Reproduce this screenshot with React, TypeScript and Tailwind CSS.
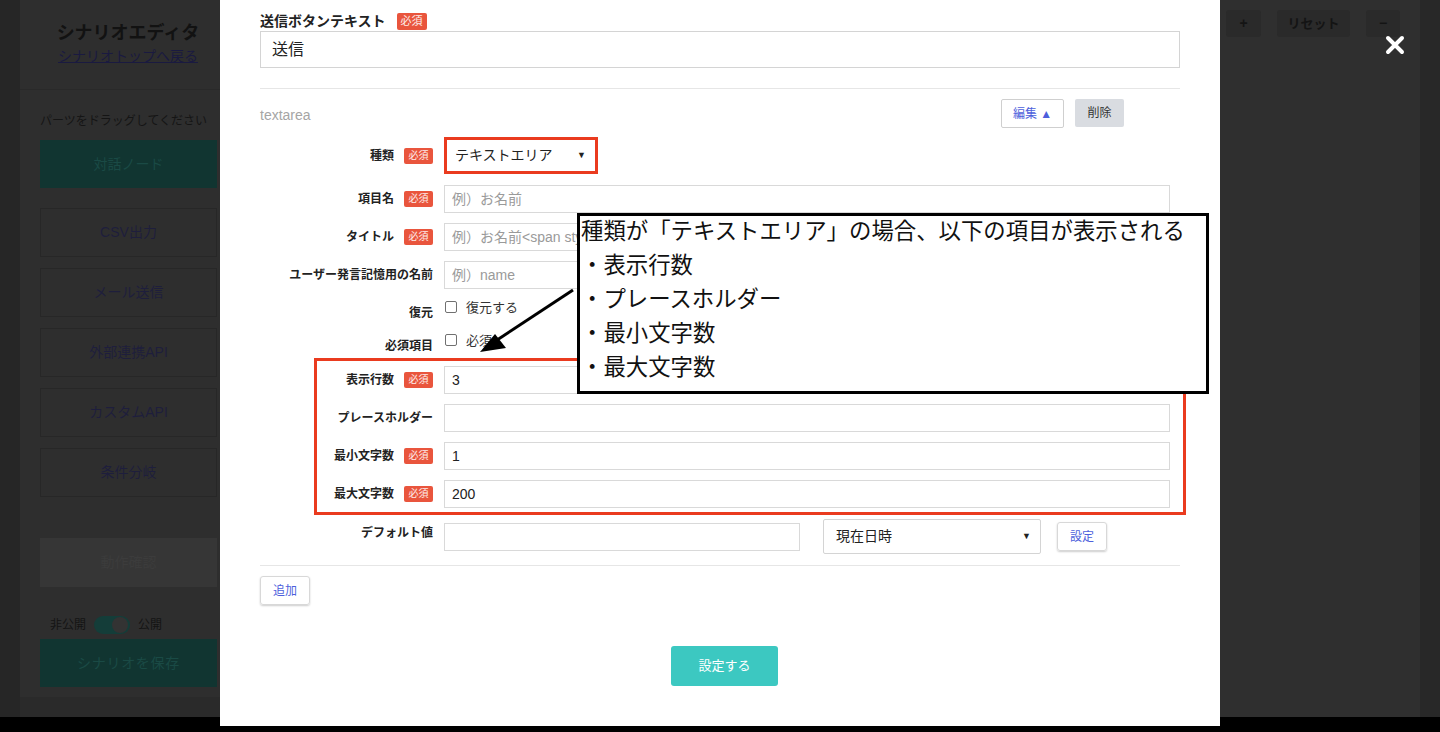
import { ReactNode } from 'react';

const sideParts = ['CSV出力', 'メール送信', '外部連携API', 'カスタムAPI', '条件分岐'];

function Badge() {
  return (
    <span className="inline-flex items-center justify-center h-[16px] w-[29px] rounded-[2px] bg-[#e9553d] text-[10px] leading-none text-white/90">
      必須
    </span>
  );
}

function Field({ value, placeholder, className = '' }: { value?: string; placeholder?: string; className?: string }) {
  return (
    <div
      className={`h-[28px] border border-[#d9d9d9] bg-white flex items-center px-[7px] text-[14px] ${className}`}
    >
      {value ? (
        <span className="text-[#222]">{value}</span>
      ) : (
        <span className="text-[#9a9a9a] whitespace-nowrap overflow-hidden">{placeholder}</span>
      )}
    </div>
  );
}

function Row({
  label,
  required,
  labelWidth = 'w-[184px]',
  children,
}: {
  label: string;
  required?: boolean;
  labelWidth?: string;
  children: ReactNode;
}) {
  return (
    <div className="flex items-center">
      <div className={`${labelWidth} shrink-0 flex items-center justify-end gap-[10px] pr-[11px]`}>
        <span className="text-[12px] font-bold text-[#222] whitespace-nowrap">{label}</span>
        {required && <Badge />}
      </div>
      {children}
    </div>
  );
}

function CheckRow({ label, text }: { label: string; text: string }) {
  return (
    <div className="flex h-[22px]">
      <div className="w-[184px] shrink-0 flex items-end justify-end pr-[11px]">
        <span className="text-[12px] font-bold text-[#222] leading-[18px]">{label}</span>
      </div>
      <div className="flex items-start gap-[9px] pl-[1px]">
        <span className="mt-[1px] w-[12px] h-[12px] border border-[#707070] rounded-[2px] bg-white" />
        <span className="text-[13px] leading-[16px] text-[#333]">{text}</span>
      </div>
    </div>
  );
}

function Sidebar() {
  return (
    <aside className="w-[200px] shrink-0 h-[697px] bg-[#2e2e2e] flex flex-col">
      <div className="h-[90px] border-b border-[#292929] flex flex-col items-center pt-[20px] pl-[16px]">
        <div className="text-[18px] font-bold text-[#121212] leading-[26px]">シナリオエディタ</div>
        <a className="text-[14px] text-[#1a1a40] underline leading-[20px]">シナリオトップへ戻る</a>
      </div>
      <div className="pl-[20px] pr-[3px] pt-[22px]">
        <div className="text-[12px] text-[#151515]">パーツをドラッグしてください</div>
        <div className="mt-[10px] h-[48px] bg-[#113531] flex items-center justify-center text-[14px] text-[#1a4a45]">
          対話ノード
        </div>
        <div className="mt-[20px] flex flex-col gap-[11px]">
          {sideParts.map((p) => (
            <div
              key={p}
              className="h-[49px] border border-[#272727] flex items-center justify-center text-[14px] text-[#1e1e3c]"
            >
              {p}
            </div>
          ))}
        </div>
        <div className="mt-[41px] h-[49px] bg-[#363636] flex items-center justify-center text-[14px] text-[#3c3c3c]">
          動作確認
        </div>
        <div className="mt-[29px] flex items-center gap-[8px] text-[12px] text-[#141414] pl-[10px]">
          <span>非公開</span>
          <span className="w-[36px] h-[18px] rounded-full bg-[#143d39] flex items-center pl-[18px]">
            <span className="w-[16px] h-[16px] rounded-full bg-[#333]" />
          </span>
          <span>公開</span>
        </div>
        <div className="mt-[5px] h-[48px] bg-[#113531] flex items-center justify-center text-[14px] text-[#1a4a45] tracking-wider">
          シナリオを保存
        </div>
      </div>
    </aside>
  );
}

export default function App() {
  return (
    <div className="relative w-[1440px] h-[732px] overflow-hidden bg-black font-['Liberation_Sans','Noto_Sans_CJK_JP',sans-serif]">
      {/* dimmed editor behind the dialog */}
      <div className="h-[717px] flex bg-[#2a2a2a]">
        <div className="w-[20px] shrink-0 bg-[#262626]" />
        <Sidebar />
        <div className="flex-1 bg-[#2f2f2f]">
          <div className="flex justify-end gap-[16px] pt-[10px] pr-[20px]">
            <span className="w-[35px] h-[27px] rounded-[3px] bg-[#2a2a2a] flex items-center justify-center text-[14px] font-bold text-[#141414]">
              +
            </span>
            <span className="w-[73px] h-[27px] rounded-[3px] bg-[#2a2a2a] flex items-center justify-center text-[13px] font-bold text-[#141414]">
              リセット
            </span>
            <span className="w-[34px] h-[27px] rounded-[3px] bg-[#2a2a2a] flex items-center justify-center text-[14px] font-bold text-[#141414]">
              −
            </span>
          </div>
        </div>
        <div className="w-[20px] shrink-0 bg-[#282828]" />
      </div>

      {/* close button */}
      <svg className="absolute left-[1385px] top-[35px]" width="20" height="20" viewBox="0 0 20 20">
        <path d="M3 3 L17 17 M17 3 L3 17" stroke="white" strokeWidth="4" strokeLinecap="round" />
      </svg>

      {/* dialog */}
      <div className="absolute left-[220px] top-0 w-[1000px] h-[726px] bg-white px-[40px] pt-[12px]">
        <div className="flex items-center gap-[11px] h-[18px]">
          <span className="text-[14px] font-bold text-[#222]">送信ボタンテキスト</span>
          <span className="inline-flex items-center justify-center h-[17px] w-[30px] rounded-[2px] bg-[#e9553d] text-[11px] leading-none text-white/90">
            必須
          </span>
        </div>
        <div className="mt-[1px] h-[37px] border border-[#d4d4d4] flex items-center px-[11px] text-[16px] text-[#222]">
          送信
        </div>

        <div className="mt-[20px] border-t border-[#e6e6e6]" />

        <div className="mt-[10px] h-[29px] flex items-center">
          <span className="text-[14px] text-[#a5a5a5] flex-1 pt-[3px]">textarea</span>
          <div className="flex gap-[11px] mr-[56px]">
            <span className="w-[63px] h-[29px] border border-[#cfcfcf] rounded-[2px] bg-white flex items-center justify-center text-[12px] text-[#4d5fdc]">
              編集 ▲
            </span>
            <span className="w-[49px] h-[28px] rounded-[2px] bg-[#d9dce1] flex items-center justify-center text-[12px] text-[#333]">
              削除
            </span>
          </div>
        </div>

        <div className="mt-[9px] flex flex-col">
          <Row label="種類" required>
            <div className="w-[154px] h-[37px] border-[3px] border-[#ea3b1f] flex items-center justify-between pl-[8px] pr-[9px]">
              <span className="text-[14px] text-[#222]">テキストエリア</span>
              <span className="text-[9px] text-[#222]">▼</span>
            </div>
          </Row>
          <div className="mt-[11px] flex flex-col gap-[10px]">
            <Row label="項目名" required>
              <Field placeholder="例）お名前" className="w-[726px]" />
            </Row>
            <Row label="タイトル" required>
              <Field placeholder="例）お名前<span style=&quot;color:red&quot;>" className="w-[726px]" />
            </Row>
            <Row label="ユーザー発言記憶用の名前">
              <Field placeholder="例）name" className="w-[726px]" />
            </Row>
          </div>
          <div className="mt-[11px] flex flex-col gap-[11px]">
            <CheckRow label="復元" text="復元する" />
            <CheckRow label="必須項目" text="必須" />
          </div>

          <div className="mt-[3px] ml-[54px] w-[872px] border-[3px] border-[#ea3b1f] pt-[5px] pb-[4px] flex flex-col gap-[10px]">
            <Row label="表示行数" required labelWidth="w-[127px]">
              <Field value="3" className="w-[726px]" />
            </Row>
            <Row label="プレースホルダー" labelWidth="w-[127px]">
              <Field className="w-[726px]" />
            </Row>
            <Row label="最小文字数" required labelWidth="w-[127px]">
              <Field value="1" className="w-[726px]" />
            </Row>
            <Row label="最大文字数" required labelWidth="w-[127px]">
              <Field value="200" className="w-[726px]" />
            </Row>
          </div>

          <div className="mt-[4px] flex items-start">
            <div className="w-[184px] shrink-0 flex justify-end pr-[11px] pt-[5px]">
              <span className="text-[12px] font-bold text-[#222]">デフォルト値</span>
            </div>
            <Field className="w-[356px] mt-[4px]" />
            <div className="ml-[23px] w-[218px] h-[35px] border border-[#d4d4d4] rounded-[2px] flex items-center justify-between pl-[12px] pr-[9px]">
              <span className="text-[14px] text-[#222]">現在日時</span>
              <span className="text-[9px] text-[#222]">▼</span>
            </div>
            <span className="ml-[16px] mt-[3px] w-[50px] h-[29px] rounded-[3px] border border-[#d8d8d8] shadow-[0_1px_2px_rgba(0,0,0,0.2)] flex items-center justify-center text-[12px] text-[#4d5fdc]">
              設定
            </span>
          </div>
        </div>

        <div className="mt-[11px] border-t border-[#e6e6e6]" />

        <span className="mt-[10px] w-[50px] h-[29px] rounded-[3px] border border-[#d8d8d8] shadow-[0_1px_2px_rgba(0,0,0,0.2)] flex items-center justify-center text-[12px] text-[#4d5fdc]">
          追加
        </span>

        <div className="mt-[41px] flex justify-center pl-[9px]">
          <span className="w-[107px] h-[40px] rounded-[3px] bg-[#3cc8c1] flex items-center justify-center text-[13px] text-white">
            設定する
          </span>
        </div>
      </div>

      {/* callout note */}
      <div className="absolute left-[577px] top-[213px] w-[632px] h-[181px] border-[3px] border-black bg-white pl-[1px] font-['Noto_Sans_CJK_JP',sans-serif] text-[22.4px] leading-[34px] text-[#111]">
        <div className="-mt-[4px]">種類が「テキストエリア」の場合、以下の項目が表示される</div>
        <div>・表示行数</div>
        <div>・プレースホルダー</div>
        <div>・最小文字数</div>
        <div>・最大文字数</div>
      </div>

      <svg className="absolute left-[470px] top-[280px]" width="110" height="80" viewBox="0 0 110 80">
        <line x1="103" y1="10" x2="24" y2="62" stroke="black" strokeWidth="3" />
        <polygon points="10,72 25,54 36,68" fill="black" />
      </svg>
    </div>
  );
}
